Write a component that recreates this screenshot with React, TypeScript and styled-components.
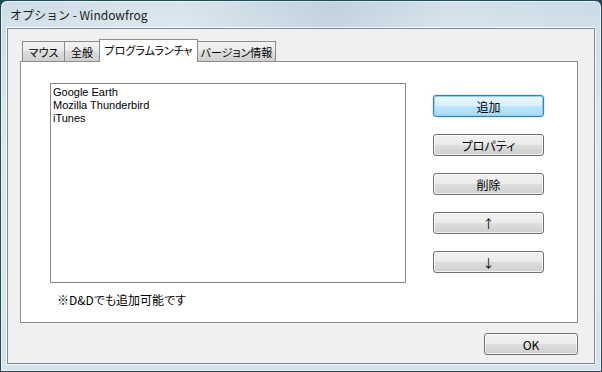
import styled, { createGlobalStyle, css } from 'styled-components';

const GlobalStyle = createGlobalStyle`
  html, body {
    margin: 0;
    padding: 0;
    overflow: hidden;
    background: #1d4652;
  }
  * {
    box-sizing: border-box;
  }
`;

const jp = `"Noto Sans CJK JP", "Noto Sans", sans-serif`;

const Window = styled.div`
  display: flex;
  flex-direction: column;
  width: 602px;
  height: 372px;
  border: 1px solid #1f4d59;
  border-radius: 7px 7px 0 0;
  background: linear-gradient(180deg, #c6d8e4 0%, #d3e0e9 10%, #dde7ee 40%, #d7e3eb 100%);
  box-shadow: inset 0 0 0 1px rgba(255, 255, 255, 0.55);
  overflow: hidden;
`;

const TitleBar = styled.div`
  display: flex;
  align-items: center;
  height: 28px;
  padding-left: 9px;
  font-family: ${jp};
  font-size: 12px;
  color: #1a1a1a;
  background: linear-gradient(90deg, rgba(255, 255, 255, 0.1) 0%, rgba(255, 255, 255, 0.3) 30%, rgba(180, 198, 212, 0.35) 55%, rgba(255, 255, 255, 0.2) 75%, rgba(255, 255, 255, 0.05) 100%);
`;

const Client = styled.div`
  flex: 1;
  display: flex;
  flex-direction: column;
  margin: 0 6px 7px 6px;
  padding: 10px 16px 8px 12px;
  background: #f0f0f0;
  border: 1px solid #7d8b98;
  box-shadow: 0 0 0 1px rgba(255, 255, 255, 0.75);
`;

const TabStrip = styled.div`
  display: flex;
  align-items: flex-end;
  height: 23px;
  padding-left: 2px;
  margin-bottom: -1px;
  position: relative;
  z-index: 1;
`;

const Tab = styled.div<{ $active?: boolean; $w: number }>`
  display: flex;
  align-items: center;
  justify-content: center;
  width: ${(p) => p.$w}px;
  height: 20px;
  margin-bottom: 1px;
  font-family: ${jp};
  font-size: 11px;
  font-feature-settings: "palt";
  color: #000;
  border: 1px solid #898c95;
  border-bottom: none;
  background: linear-gradient(180deg, #f3f3f3 0%, #ebebeb 45%, #dddddd 50%, #cfcfcf 100%);
  & + & {
    margin-left: -1px;
  }
  ${(p) =>
    p.$active &&
    css`
      height: 23px;
      margin-bottom: 0;
      padding-bottom: 2px;
      background: #fff;
      position: relative;
      z-index: 2;
    `}
`;

const Panel = styled.div`
  height: 262px;
  border: 1px solid #898c95;
  background: #fff;
  padding: 21px 0 0 29px;
`;

const PanelRow = styled.div`
  display: flex;
  align-items: flex-start;
`;

const ListBox = styled.div`
  width: 356px;
  height: 200px;
  border: 1px solid #828790;
  background: #fff;
  padding: 2px 0 0 2px;
  font-family: "Liberation Sans", Arial, sans-serif;
  font-size: 11px;
  line-height: 13px;
  color: #000;
`;

const ListItem = styled.div`
  white-space: nowrap;
`;

const ButtonColumn = styled.div`
  display: flex;
  flex-direction: column;
  gap: 17px;
  margin-left: 27px;
  padding-top: 12px;
`;

const Button = styled.div<{ $default?: boolean; $w?: number }>`
  display: flex;
  align-items: center;
  justify-content: center;
  width: ${(p) => p.$w ?? 111}px;
  height: 22px;
  font-family: ${jp};
  font-size: 12px;
  font-feature-settings: "palt";
  color: #000;
  border: 1px solid #707070;
  border-radius: 3px;
  background: linear-gradient(180deg, #f2f2f2 0%, #ebebeb 48%, #dddddd 52%, #cfcfcf 100%);
  box-shadow: inset 0 0 0 1px rgba(255, 255, 255, 0.7);
  ${(p) =>
    p.$default &&
    css`
      border-color: #3c7fb1;
      background: linear-gradient(180deg, #eaf6fd 0%, #d9f0fc 48%, #bee6fd 52%, #a7d9f5 100%);
      box-shadow: inset 0 0 0 1px #8fd0f4, 0 0 2px rgba(60, 160, 230, 0.6);
    `}
`;

const Note = styled.div`
  margin-top: 9px;
  padding-left: 7px;
  font-family: ${jp};
  font-size: 12px;
  font-feature-settings: "palt";
  line-height: 16px;
  color: #000;
`;

const Footer = styled.div`
  display: flex;
  justify-content: flex-end;
  margin-top: 10px;
`;

const tabs = [
  { label: 'マウス', w: 43 },
  { label: '全般', w: 36 },
  { label: 'プログラムランチャ', w: 99, active: true },
  { label: 'バージョン情報', w: 79 },
];

const items = ['Google Earth', 'Mozilla Thunderbird', 'iTunes'];

export default function App() {
  return (
    <>
      <GlobalStyle />
      <Window>
        <TitleBar>オプション - Windowfrog</TitleBar>
        <Client>
          <TabStrip>
            {tabs.map((t) => (
              <Tab key={t.label} $w={t.w} $active={t.active}>
                {t.label}
              </Tab>
            ))}
          </TabStrip>
          <Panel>
            <PanelRow>
              <ListBox>
                {items.map((it) => (
                  <ListItem key={it}>{it}</ListItem>
                ))}
              </ListBox>
              <ButtonColumn>
                <Button $default>追加</Button>
                <Button>プロパティ</Button>
                <Button>削除</Button>
                <Button>↑</Button>
                <Button>↓</Button>
              </ButtonColumn>
            </PanelRow>
            <Note>※D&amp;Dでも追加可能です</Note>
          </Panel>
          <Footer>
            <Button $w={94}>OK</Button>
          </Footer>
        </Client>
      </Window>
    </>
  );
}
